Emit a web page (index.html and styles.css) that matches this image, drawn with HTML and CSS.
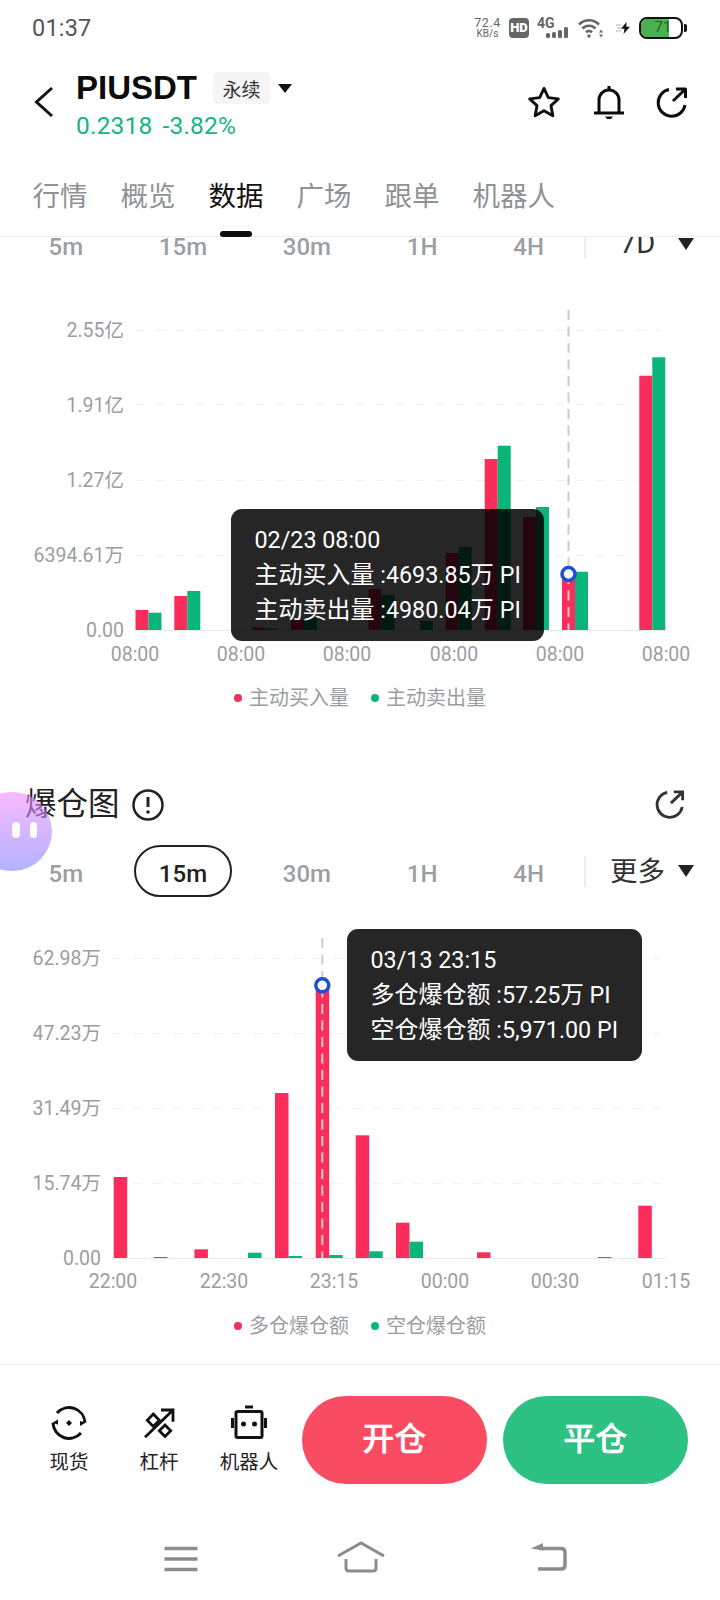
FILE: index.html
```html
<!DOCTYPE html>
<html lang="zh">
<head>
<meta charset="utf-8">
<title>PIUSDT 数据</title>
<link rel="stylesheet" href="styles.css">
</head>
<body>
<div class="page">
  <div class="status">
    <span class="time">01:37</span>
    <div class="net"><span class="net-num">72.4</span><span class="net-unit">KB/s</span></div>
    <span class="hd">HD</span>
    <div class="cell">
      <span class="cell-4g">4G</span>
      <svg class="cell-bars" width="24" height="11" viewBox="0 0 24 11"><rect x="0" y="6" width="4" height="5" rx="1.5"/><rect x="6" y="5" width="4" height="6" rx="1.5"/><rect x="12" y="3" width="4" height="8" rx="1.5"/><rect x="18" y="0" width="4" height="11" rx="1.5"/></svg>
    </div>
    <svg class="wifi" width="25" height="20" viewBox="0 0 25 20"><g class="wifi-arcs"><path d="M1 6.5A14 14 0 0 1 21 6.5"/><path d="M4.5 10.5A9 9 0 0 1 17.5 10.5"/><path d="M8 14.2A4.5 4.5 0 0 1 14 14.2"/></g><circle class="wifi-fill" cx="11" cy="18" r="1.7"/><path class="wifi-fill" d="M23 11.5l2 3h-4zM23 19.5l2-3h-4z"/></svg>
    <svg class="charge" width="15" height="12" viewBox="0 0 15 12"><path class="charge-lines" d="M0 3h5M1 6h4M0 9h5"/><path class="charge-bolt" d="M10.500 0L5 6.800h3.500L7.500 12L14 4.800h-3.700z"/></svg>
    <div class="battery"><div class="battery-fill"></div><span class="battery-num">71</span></div>
    <span class="battery-nub"></span>
  </div>

  <header class="head">
    <svg class="back" width="20" height="32" viewBox="0 0 20 32"><path d="M18 2L2.500 16L18 30"/></svg>
    <div class="symbol">
      <div class="symbol-top">
        <span class="symbol-name">PIUSDT</span>
        <span class="badge">永续</span>
        <span class="tri tri-small"></span>
      </div>
      <div class="quote"><span>0.2318</span><span>-3.82%</span></div>
    </div>
    <div class="head-icons">
      <svg width="34" height="34" viewBox="0 0 36 36"><path class="ico" d="M18 2.500L22.600 12.300L33.200 13.600L25.400 20.800L27.400 31.500L18 26.200L8.600 31.500L10.600 20.800L2.800 13.600L13.400 12.300Z"/></svg>
      <svg width="32" height="36" viewBox="0 0 32 36"><path class="ico" d="M1 28H31M6 28V15A10 10 0 0 1 26 15V28"/><path class="ico-fill" d="M14.500 1h3v3h-3zM12 31.500h8l-2 2.500h-4z"/></svg>
      <svg width="32" height="32" viewBox="0 0 32 32"><path class="ico" d="M13 2.500A13.500 13.500 0 1 0 29 18M17 14L29.500 2M20 2H29.500V11"/></svg>
    </div>
  </header>

  <nav class="tabs">
    <span class="tab">行情</span>
    <span class="tab">概览</span>
    <span class="tab tab-active">数据</span>
    <span class="tab">广场</span>
    <span class="tab">跟单</span>
    <span class="tab">机器人</span>
  </nav>

  <main class="scroll">
    <div class="periods periods-first">
      <div class="period-list">
        <span class="period">5m</span>
        <span class="period">15m</span>
        <span class="period">30m</span>
        <span class="period">1H</span>
        <span class="period">4H</span>
      </div>
      <div class="more"><span class="more-label more-latin">7D</span><span class="tri"></span></div>
    </div>

    <div class="chart">
      <svg class="plot" width="720" height="390" viewBox="0 290 720 390">
        <g class="grid"><path d="M136 330.500H660M136 404.500H660M136 480.500H660M136 555.500H660"/></g>
        <path class="base" d="M136 630.500H666"/>
        <g class="red">
          <rect x="135.500" y="610" width="13" height="20"/>
          <rect x="174.300" y="596" width="13" height="34"/>
          <rect x="252" y="627.500" width="13" height="2.500"/>
          <rect x="291" y="620" width="13" height="10"/>
          <rect x="368.500" y="589" width="13" height="41"/>
          <rect x="445.700" y="553" width="13" height="77"/>
          <rect x="484.700" y="459" width="13" height="171"/>
          <rect x="523" y="517" width="13" height="113"/>
          <rect x="562" y="575" width="13" height="55"/>
          <rect x="639.300" y="375.700" width="13" height="254.300"/>
        </g>
        <g class="green">
          <rect x="148.500" y="612.700" width="13" height="17.300"/>
          <rect x="187.300" y="591" width="13" height="39"/>
          <rect x="265" y="628.500" width="13" height="1.500"/>
          <rect x="304" y="618" width="13" height="12"/>
          <rect x="381.500" y="595" width="13" height="35"/>
          <rect x="420" y="621" width="13" height="9"/>
          <rect x="458.700" y="547" width="13" height="83"/>
          <rect x="497.700" y="445.700" width="13" height="184.300"/>
          <rect x="536" y="507" width="13" height="123"/>
          <rect x="575" y="571.700" width="13" height="58.300"/>
          <rect x="652.300" y="357.300" width="13" height="272.700"/>
        </g>
        <path class="cross" d="M568.500 310V630"/>
        <circle class="marker" cx="568.500" cy="574" r="6.500"/>
        <g class="ylab">
          <text x="124" y="336.500">2.55亿</text>
          <text x="124" y="411.500">1.91亿</text>
          <text x="124" y="486.500">1.27亿</text>
          <text x="124" y="561.500">6394.61万</text>
          <text x="124" y="636.500">0.00</text>
        </g>
        <g class="xlab">
          <text x="135" y="660.500">08:00</text>
          <text x="241" y="660.500">08:00</text>
          <text x="347" y="660.500">08:00</text>
          <text x="454" y="660.500">08:00</text>
          <text x="560" y="660.500">08:00</text>
          <text x="666" y="660.500">08:00</text>
        </g>
      </svg>
      <div class="tip tip-one">
        <div>02/23 08:00</div>
        <div><span class="tip-cjk">主动买入量</span> :4693.85万 PI</div>
        <div><span class="tip-cjk">主动卖出量</span> :4980.04万 PI</div>
      </div>
    </div>
    <div class="legend">
      <span class="leg"><i class="dot dot-red"></i>主动买入量</span>
      <span class="leg"><i class="dot dot-green"></i>主动卖出量</span>
    </div>

    <div class="title-row">
      <h2 class="title">爆仓图</h2>
      <svg class="info" width="34" height="34" viewBox="0 0 34 34"><circle cx="17" cy="17" r="14.500"/><path d="M17 9V19"/><circle class="info-dot" cx="17" cy="24" r="1.800"/></svg>
      <svg class="share" width="30" height="30" viewBox="0 0 32 32"><path d="M13 2.500A13.500 13.500 0 1 0 29 18M17 14L29.500 2M20 2H29.500V11"/></svg>
    </div>

    <div class="periods">
      <div class="period-list">
        <span class="period">5m</span>
        <span class="period period-active">15m</span>
        <span class="period">30m</span>
        <span class="period">1H</span>
        <span class="period">4H</span>
      </div>
      <div class="more"><span class="more-label">更多</span><span class="tri"></span></div>
    </div>

    <div class="chart chart-two">
      <svg class="plot" width="720" height="385" viewBox="0 915 720 385">
        <g class="grid"><path d="M113 958.500H660M113 1033.500H660M113 1108.500H660M113 1183.500H660"/></g>
        <path class="base" d="M113 1258.500H666"/>
        <g class="red">
          <rect x="113.700" y="1177" width="13.500" height="81"/>
          <rect x="154" y="1257" width="13.500" height="1"/>
          <rect x="194.400" y="1249.300" width="13.500" height="8.700"/>
          <rect x="275" y="1093" width="13.500" height="165"/>
          <rect x="315.700" y="986" width="13.500" height="272"/>
          <rect x="355.700" y="1135.300" width="13.500" height="122.700"/>
          <rect x="396" y="1222.700" width="13.500" height="35.300"/>
          <rect x="477" y="1252.300" width="13.500" height="5.700"/>
          <rect x="598" y="1257" width="13.500" height="1"/>
          <rect x="638.300" y="1205.700" width="13.500" height="52.300"/>
        </g>
        <g class="green">
          <rect x="248" y="1252.700" width="13.500" height="5.300"/>
          <rect x="288.500" y="1256" width="13.500" height="2"/>
          <rect x="329.200" y="1255" width="13.500" height="3"/>
          <rect x="369.200" y="1251.300" width="13.500" height="6.700"/>
          <rect x="409.500" y="1241.700" width="13.500" height="16.300"/>
        </g>
        <path class="cross" d="M322.300 938V1258"/>
        <circle class="marker" cx="322.300" cy="985.300" r="6.500"/>
        <g class="ylab">
          <text x="101" y="965">62.98万</text>
          <text x="101" y="1040">47.23万</text>
          <text x="101" y="1115">31.49万</text>
          <text x="101" y="1190">15.74万</text>
          <text x="101" y="1264.500">0.00</text>
        </g>
        <g class="xlab">
          <text x="113" y="1288">22:00</text>
          <text x="224" y="1288">22:30</text>
          <text x="334" y="1288">23:15</text>
          <text x="445" y="1288">00:00</text>
          <text x="555" y="1288">00:30</text>
          <text x="666" y="1288">01:15</text>
        </g>
      </svg>
      <div class="tip tip-two">
        <div>03/13 23:15</div>
        <div><span class="tip-cjk">多仓爆仓额</span> :57.25万 PI</div>
        <div><span class="tip-cjk">空仓爆仓额</span> :5,971.00 PI</div>
      </div>
    </div>
    <div class="legend legend-two">
      <span class="leg"><i class="dot dot-red"></i>多仓爆仓额</span>
      <span class="leg"><i class="dot dot-green"></i>空仓爆仓额</span>
    </div>
  </main>

  <div class="blob"><i></i><i></i></div>

  <footer class="foot">
    <div class="actions">
      <div class="tool">
        <svg width="36" height="36" viewBox="0 0 36 36"><path class="tool-ico" d="M6 8A16 16 0 0 1 34 17.500M2 18A16 16 0 0 0 30 28"/><path class="tool-fill" d="M18 15l3 3l-3 3l-3-3zM1 18l6-3.500v5zM35 17.500l-6 3.500v-5z"/></svg>
        <span>现货</span>
      </div>
      <div class="tool">
        <svg width="36" height="36" viewBox="0 0 36 36"><path class="tool-ico tool-thin" d="M4 32.300L32 5M20 5H32V16.700M12.300 9l6 6.200l-6 6.200l-6-6.200zM24 20l5.700 5.700l-5.700 5.700l-5.700-5.700z"/></svg>
        <span>杠杆</span>
      </div>
      <div class="tool">
        <svg width="36" height="36" viewBox="0 0 36 36"><path class="tool-ico" d="M6.500 6.500H29.500Q31 6.500 31 8V31Q31 32.500 29.500 32.500H6.500Q5 32.500 5 31V8Q5 6.500 6.500 6.500ZM14 2H22M1.500 13V23M34.500 13V23"/><circle class="tool-fill" cx="12.500" cy="19" r="2.500"/><circle class="tool-fill" cx="23.500" cy="19" r="2.500"/></svg>
        <span>机器人</span>
      </div>
      <div class="btn btn-red">开仓</div>
      <div class="btn btn-green">平仓</div>
    </div>
    <div class="navbar">
      <svg width="34" height="26" viewBox="0 0 34 26"><path class="nav-ico" d="M0.500 2.500H33.500M0.500 13H33.500M0.500 23.500H33.500"/></svg>
      <svg width="48" height="32" viewBox="0 0 48 32"><path class="nav-ico nav-thin" d="M1 15L24 2L47 15M9 18V27Q9 30 12 30H36Q39 30 39 27V18"/></svg>
      <svg width="36" height="28" viewBox="0 0 36 28"><path class="nav-ico" d="M8 5.500H30Q34 5.500 34 9.500V22Q34 26 30 26H7"/><path class="nav-fill" d="M0 5.500L12 0V7.500z"/></svg>
    </div>
  </footer>
</div>
</body>
</html>
```

FILE: styles.css
```css
* { box-sizing: border-box; }
html, body { margin: 0; padding: 0; background: #fff; }
body { font-family: Roboto, "Noto Sans CJK SC", sans-serif; color: #111; }
.page { position: relative; width: 720px; height: 1600px; overflow: hidden; background: #fff; }

/* status bar */
.status { display: flex; align-items: center; height: 56px; padding-left: 32px; color: #666; }
.time { font-size: 23.500px; color: #555; margin-right: auto; letter-spacing: .2px; }
.net { display: flex; flex-direction: column; align-items: center; width: 25px; margin-right: 9px; line-height: 11px; }
.net-num { font-size: 12.500px; letter-spacing: .5px; }
.net-unit { font-size: 10px; }
.hd { width: 20px; height: 20px; border-radius: 4px; background: #666; color: #fff; font-size: 13px; font-weight: 900; line-height: 20px; text-align: center; margin-right: 8px; }
.cell { position: relative; width: 33px; height: 20px; margin-right: 8px; }
.cell-4g { position: absolute; left: 0; top: -2px; font-size: 14px; font-weight: 700; line-height: 14px; }
.cell-bars { position: absolute; left: 9px; top: 9px; fill: #666; }
.wifi { margin-right: 13px; }
.wifi-arcs path { fill: none; stroke: #666; stroke-width: 2.600; }
.wifi-fill { fill: #666; }
.charge { margin-right: 8px; }
.charge-lines { fill: none; stroke: #ccc; stroke-width: 1.600; }
.charge-bolt { fill: #111; }
.battery { position: relative; width: 44px; height: 22px; border: 2.500px solid #111; border-radius: 8px; overflow: hidden; }
.battery-fill { width: 71%; height: 100%; background: #4caf50; }
.battery-num { position: absolute; inset: 0; padding-left: 4px; text-align: center; font-size: 15px; line-height: 17px; color: #176a26; }
.battery-nub { width: 3px; height: 8px; margin: 0 33px 0 1px; border-radius: 0 2px 2px 0; background: #111; }

/* header */
.head { display: flex; height: 84px; padding-left: 34px; }
.back { margin-top: 30px; fill: none; }
.back path { fill: none; stroke: #111; stroke-width: 3; }
.symbol { margin-left: 22px; }
.symbol-top { display: flex; align-items: center; height: 48px; margin-top: 8px; }
.symbol-name { font-family: "Liberation Sans", sans-serif; font-weight: 700; font-size: 33px; color: #0c0c0c; }
.badge { display: flex; align-items: center; justify-content: center; width: 57px; height: 32px; margin-left: 16px; background: #f5f5f5; border-radius: 4px; font-size: 19px; color: #333; }
.quote { display: flex; gap: 10px; font-size: 24.500px; line-height: 32px; color: #14b582; margin-top: -2px; letter-spacing: .2px; }
.head-icons { display: flex; align-items: center; gap: 31.500px; height: 36px; margin: 29px 32px 0 auto; }
.ico { fill: none; stroke: #0c0c0c; stroke-width: 3; stroke-linejoin: round; }
.ico-fill { fill: #0c0c0c; }

/* tabs */
.tabs { display: flex; gap: 33px; height: 97px; padding-left: 32.500px; border-bottom: 1px solid #eee; }
.tab { position: relative; height: 97px; padding-top: 38px; font-size: 27.500px; line-height: 38px; color: #8e9295; }
.tab-active { color: #111; }
.tab-active::after { content: ""; position: absolute; left: 11.500px; bottom: 0; width: 32px; height: 6px; border-radius: 3px; background: #0c0c0c; }

/* scrolling content */
.scroll { height: 1127px; overflow: hidden; }
.periods { display: flex; align-items: center; justify-content: space-between; height: 52px; margin-top: 22px; padding: 0 26px 0 24px; }
.periods-first { margin-top: -19.500px; }
.period-list { display: flex; gap: 26.800px; }
.period { flex: none; height: 52px; padding: 0 22.500px; border: 2px solid transparent; border-radius: 26px; font-size: 24px; font-weight: 500; line-height: 54px; color: #9a9fa4; }
.period-active { border-color: #222; color: #222; }
.more { display: flex; flex: none; align-items: center; height: 31px; padding-left: 24px; border-left: 2px solid #eee; }
.more-label { width: 55px; margin-right: 13px; text-align: center; font-size: 27.500px; line-height: 31px; color: #333; white-space: nowrap; }
.more-latin { font-size: 29px; line-height: 39px; }
.tri { width: 0; height: 0; border-left: 8px solid transparent; border-right: 8px solid transparent; border-top: 12px solid #222; }
.tri-small { margin-left: 8px; border-left-width: 7px; border-right-width: 7px; border-top-width: 9px; border-top-color: #111; }

.chart { position: relative; height: 390px; margin-top: 20.500px; }
.chart-two { height: 385px; margin-top: 18px; }
.plot { display: block; }
.grid path { fill: none; stroke: #f0f0f0; stroke-width: 1; stroke-dasharray: 9 11; }
.base { fill: none; stroke: #e8e9ea; stroke-width: 1; }
.red rect { fill: #fb2d5c; }
.green rect { fill: #09b578; }
.cross { fill: none; stroke: #ccc; stroke-width: 2; stroke-dasharray: 10 6.500; }
.marker { fill: #fff; stroke: #1a4fd6; stroke-width: 3.500; }
.ylab text, .xlab text { font-family: Roboto, "Noto Sans CJK SC", sans-serif; font-size: 19.500px; fill: #9a9ea2; }
.ylab text { text-anchor: end; }
.xlab text { text-anchor: middle; }

.tip { position: absolute; height: 132px; padding: 14px 0 0 23.500px; border-radius: 11px; background: rgba(0, 0, 0, .85); color: #fff; font-size: 23.300px; line-height: 35px; white-space: nowrap; }
.tip-cjk { font-size: 24px; }
.tip-one { left: 231px; top: 218.500px; width: 313px; }
.tip-two { left: 347px; top: 13.500px; width: 295px; }

.legend { display: flex; justify-content: center; gap: 22px; height: 36px; font-size: 20px; line-height: 38px; color: #9a9ea2; }
.legend-two { margin-top: 8px; }
.leg { display: flex; align-items: center; gap: 7px; }
.dot { width: 8px; height: 8px; border-radius: 50%; }
.dot-red { background: #f0305c; }
.dot-green { background: #09b578; }

.title-row { display: flex; align-items: center; height: 40px; margin-top: 67px; padding-left: 25px; }
.title { margin: 4px 0 0; font-size: 31.500px; font-weight: 400; line-height: 40px; color: #222; }
.info { margin: 4px 0 0 11px; }
.info circle { fill: none; stroke: #222; stroke-width: 2.500; }
.info path { fill: none; stroke: #222; stroke-width: 3; }
.info .info-dot { fill: #222; stroke: none; }
.share { margin: 4px 35px 0 auto; }
.share path { fill: none; stroke: #333; stroke-width: 3; }

/* floating helper */
.blob { position: absolute; left: -28px; top: 792px; display: flex; justify-content: flex-end; gap: 10px; width: 80px; height: 79px; padding: 30px 15px 0 0; border-radius: 40px; background: linear-gradient(180deg, rgba(242, 140, 255, .6), rgba(128, 128, 255, .6)); }
.blob i { width: 7.500px; height: 16px; border-radius: 4px; background: #fff; opacity: .95; }

/* footer */
.foot { border-top: 1px solid #f0f0f0; height: 236px; }
.actions { display: flex; align-items: center; height: 88px; margin-top: 31px; padding-left: 24px; }
.tool { display: flex; flex-direction: column; align-items: center; width: 90px; color: #222; font-size: 19.500px; line-height: 26px; }
.tool svg { margin-bottom: 9px; }
.tool-ico { fill: none; stroke: #111; stroke-width: 3; }
.tool-thin { stroke-width: 2.800; }
.tool-fill { fill: #111; }
.btn { display: flex; align-items: center; justify-content: center; width: 184.500px; height: 88px; padding-bottom: 8px; border-radius: 44px; color: #fff; font-size: 32px; font-weight: 500; -webkit-text-stroke: .4px #fff; }
.btn-red { margin-left: 8px; background: #f94c63; }
.btn-green { margin-left: 16.500px; background: #2dc184; }
.navbar { display: flex; align-items: flex-start; height: 116px; padding: 62px 0 0 164px; }
.navbar svg:nth-child(2) { margin: -5px 0 0 139px; }
.navbar svg:nth-child(3) { margin: -3px 0 0 146px; }
.nav-ico { fill: none; stroke: #8c8c8c; stroke-width: 3.500; }
.nav-thin { stroke-width: 3; }
.nav-fill { fill: #8c8c8c; }
```
